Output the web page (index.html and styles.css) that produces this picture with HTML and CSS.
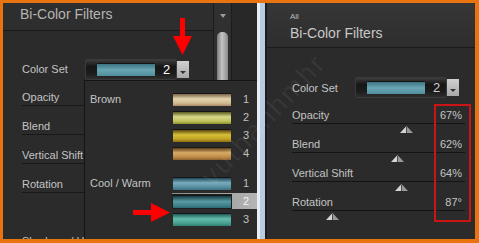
FILE: index.html
```html
<!DOCTYPE html>
<html>
<head>
<meta charset="utf-8">
<link rel="stylesheet" href="styles.css">
</head>
<body>
<div class="frame">
  <section class="lpanel">
    <div class="lmain">
      <header class="lhead">Bi-Color Filters</header>
      <div class="lbody">
        <div class="crow">
          <span class="lbl">Color Set</span>
          <div class="dd">
            <span class="dd-box"><span class="sw sw-cur"></span><span class="dd-num">2</span></span>
            <span class="dd-btn"><span class="tri-down"></span></span>
          </div>
        </div>
        <div class="lrow"><span class="lbl">Opacity</span></div>
        <div class="lrow"><span class="lbl">Blend</span></div>
        <div class="lrow"><span class="lbl">Vertical Shift</span></div>
        <div class="lrow"><span class="lbl">Rotation</span></div>
        <div class="lsub">Shadows / Highlights</div>
      </div>
    </div>
    <div class="scrollcol">
      <span class="scroll-up"></span>
      <span class="scroll-thumb"></span>
    </div>
    <div class="lstrip"></div>

    <div class="popup">
      <div class="group">
        <div class="glabel">Brown</div>
        <div class="items">
          <div class="item"><span class="sw sw-b1"></span><span class="num">1</span></div>
          <div class="item"><span class="sw sw-b2"></span><span class="num">2</span></div>
          <div class="item"><span class="sw sw-b3"></span><span class="num">3</span></div>
          <div class="item"><span class="sw sw-b4"></span><span class="num">4</span></div>
        </div>
      </div>
      <div class="group">
        <div class="glabel">Cool / Warm</div>
        <div class="items">
          <div class="item"><span class="sw sw-c1"></span><span class="num">1</span></div>
          <div class="item selected"><span class="sw sw-c2"></span><span class="num">2</span></div>
          <div class="item"><span class="sw sw-c3"></span><span class="num">3</span></div>
        </div>
      </div>
    </div>
  </section>

  <div class="divider"></div>

  <section class="rpanel">
    <header class="rhead">
      <div class="crumb">All</div>
      <div class="rtitle">Bi-Color Filters</div>
    </header>
    <div class="rbody">
      <div class="crow rcrow">
        <span class="lbl">Color Set</span>
        <div class="dd">
          <span class="dd-box"><span class="sw sw-cur"></span><span class="dd-num dim">2</span></span>
          <span class="dd-btn"><span class="tri-down"></span></span>
        </div>
      </div>
      <div class="slider">
        <div class="shead"><span class="lbl">Opacity</span><span class="val">67%</span></div>
        <div class="track"><svg class="thumb" style="--v:67%" width="13" height="7" viewBox="0 0 13 7"><polygon points="0,7 6.5,0 6.5,7" fill="#d4d4d4"/><polygon points="6.5,0 13,7 6.5,7" fill="#9a9a9a"/><line x1="6.5" y1="1" x2="6.5" y2="7" stroke="#4a4a4a" stroke-width="1"/></svg></div>
      </div>
      <div class="slider">
        <div class="shead"><span class="lbl">Blend</span><span class="val">62%</span></div>
        <div class="track"><svg class="thumb" style="--v:62%" width="13" height="7" viewBox="0 0 13 7"><polygon points="0,7 6.5,0 6.5,7" fill="#d4d4d4"/><polygon points="6.5,0 13,7 6.5,7" fill="#9a9a9a"/><line x1="6.5" y1="1" x2="6.5" y2="7" stroke="#4a4a4a" stroke-width="1"/></svg></div>
      </div>
      <div class="slider">
        <div class="shead"><span class="lbl">Vertical Shift</span><span class="val">64%</span></div>
        <div class="track"><svg class="thumb" style="--v:64%" width="13" height="7" viewBox="0 0 13 7"><polygon points="0,7 6.5,0 6.5,7" fill="#d4d4d4"/><polygon points="6.5,0 13,7 6.5,7" fill="#9a9a9a"/><line x1="6.5" y1="1" x2="6.5" y2="7" stroke="#4a4a4a" stroke-width="1"/></svg></div>
      </div>
      <div class="slider">
        <div class="shead"><span class="lbl">Rotation</span><span class="val">87°</span></div>
        <div class="track"><svg class="thumb" style="--v:24%" width="13" height="7" viewBox="0 0 13 7"><polygon points="0,7 6.5,0 6.5,7" fill="#d4d4d4"/><polygon points="6.5,0 13,7 6.5,7" fill="#9a9a9a"/><line x1="6.5" y1="1" x2="6.5" y2="7" stroke="#4a4a4a" stroke-width="1"/></svg></div>
      </div>
    </div>
  </section>

  <div class="watermark">vuthanhmhr</div>

  <svg class="arrow-down" width="19" height="37" viewBox="0 0 19 37">
    <rect x="7" y="0" width="5" height="20" fill="#ff0000"/>
    <polygon points="0,18 19,18 9.5,37" fill="#ff0000"/>
  </svg>
  <svg class="arrow-right" width="37" height="19" viewBox="0 0 37 19">
    <rect x="0" y="7" width="20" height="5" fill="#ff0000"/>
    <polygon points="18,0 37,9.5 18,19" fill="#ff0000"/>
  </svg>
  <div class="redbox"></div>
</div>
</body>
</html>
```

FILE: styles.css
```css
html, body {
  margin: 0;
  padding: 0;
  background: #e8730f;
  overflow: hidden;
}

.frame {
  position: relative;
  box-sizing: border-box;
  width: 479px;
  height: 243px;
  border-style: solid;
  border-color: #e8730f;
  border-width: 3px 4px 4px 3px;
  display: flex;
  overflow: hidden;
  background: #2b2b2b;
  font-family: "Liberation Sans", Arial, sans-serif;
  font-size: 11px;
  color: #c4c4c4;
}

/* ---------- left panel ---------- */
.lpanel {
  position: relative;
  width: 254px;
  display: flex;
  flex: none;
}

.lmain {
  width: 210px;
  flex: none;
  background: #2b2b2b;
}

.lhead {
  height: 27px;
  line-height: 22px;
  padding-left: 17px;
  font-size: 14px;
  color: #b4b4b4;
  background: #2e2e2e;
  border-bottom: 1px solid #1a1a1a;
}

.lbody {
  padding: 27px 0 0 19px;
}

.crow {
  display: flex;
  align-items: center;
  height: 22px;
  margin-bottom: -3px;
}

.crow .lbl {
  width: 63px;
  flex: none;
}

.lbl {
  line-height: 12px;
  white-space: nowrap;
}

.dd {
  display: flex;
  align-items: center;
  height: 21px;
}

.dd-box {
  box-sizing: border-box;
  width: 92px;
  height: 21px;
  display: flex;
  align-items: center;
  padding-left: 11px;
  background: linear-gradient(#3c3c3c, #161616 35%, #1c1c1c 70%, #2e2e2e);
  border: 1px solid #3a3a3a;
  border-radius: 2px;
}

.dd-box .sw {
  width: 58px;
  height: 13px;
}

.dd-num {
  margin-left: 8px;
  font-size: 13px;
  color: #ffffff;
}

.dd-num.dim {
  color: #cfcfcf;
}

.dd-btn {
  width: 12px;
  height: 17px;
  display: flex;
  align-items: flex-end;
  justify-content: center;
  box-sizing: border-box;
  padding-bottom: 4px;
  background: linear-gradient(#d0d0d0, #a8a8a8);
}

.tri-down {
  width: 0;
  height: 0;
  border-left: 3px solid transparent;
  border-right: 3px solid transparent;
  border-top: 3px solid #333;
}

.lrow {
  box-sizing: border-box;
  height: 29px;
  padding-bottom: 2px;
  display: flex;
  align-items: flex-end;
  border-bottom: 1px solid #181818;
}

.lsub {
  margin-top: 42px;
  line-height: 12px;
  white-space: nowrap;
}

.scrollcol {
  box-sizing: border-box;
  width: 19px;
  flex: none;
  display: flex;
  flex-direction: column;
  align-items: center;
  background: #303030;
  border-left: 1px solid #1c1c1c;
  border-right: 1px solid #1c1c1c;
}

.scroll-up {
  margin-top: 11px;
  width: 0;
  height: 0;
  border-left: 3px solid transparent;
  border-right: 3px solid transparent;
  border-top: 4px solid #9a9a9a;
}

.scroll-thumb {
  margin-top: 14px;
  width: 11px;
  flex: 1;
  border-radius: 5px 5px 0 0;
  background: linear-gradient(to right, #7a7a7a, #c4c4c4 45%, #8a8a8a);
}

.lstrip {
  flex: 1;
  background: #282828;
}

/* ---------- popup list ---------- */
.popup {
  position: absolute;
  left: 81px;
  top: 77px;
  right: 0;
  bottom: 0;
  box-sizing: border-box;
  padding-top: 8px;
  background: #2b2b2b;
  border-left: 1px solid #141414;
  border-top: 1px solid #141414;
}

.group {
  display: flex;
  margin-bottom: 10px;
}

.glabel {
  width: 82px;
  flex: none;
  padding-left: 5px;
  line-height: 20px;
  font-size: 11px;
  color: #c4c4c4;
  white-space: nowrap;
}

.items {
  flex: 1;
}

.item {
  height: 16px;
  margin: 2px 0;
  padding-left: 1px;
  display: flex;
  align-items: center;
}

.item .sw {
  width: 58px;
  height: 13px;
}

.num {
  margin-left: 12px;
  color: #c0c0c0;
}

.item.selected {
  background: linear-gradient(to right, #8c8c8c, #b4b4b4);
}

.item.selected .num {
  color: #f4f4f4;
}

.item.selected .sw {
  box-shadow: 0 0 0 1px #1e1e1e;
}

.sw {
  display: block;
  box-sizing: border-box;
  border-top: 1px solid #151515;
}

.sw-cur { background: linear-gradient(#3c7482, #6aa6b4 50%, #4f8e9c); }
.sw-b1 { background: linear-gradient(#7a6448, #e2d2ac 40%, #d2bc92 75%, #a88c66); }
.sw-b2 { background: linear-gradient(#5c5c1c, #d6d88a 40%, #c2c45e 75%, #8e8e30); }
.sw-b3 { background: linear-gradient(#5a4410, #d6c038 40%, #c2a424 75%, #8a6c10); }
.sw-b4 { background: linear-gradient(#5e3e1c, #d8aa66 40%, #c08c48 75%, #8a6030); }
.sw-c1 { background: linear-gradient(#1e4656, #78acbc 40%, #5890a2 75%, #3a7080); }
.sw-c2 { background: linear-gradient(#163c44, #5a9aa2 45%, #3e8088 80%, #2c6a72); }
.sw-c3 { background: linear-gradient(#1e5e56, #64bcac 40%, #4aa292 75%, #2e8070); }

/* ---------- divider ---------- */
.divider {
  width: 10px;
  flex: none;
  background: linear-gradient(to right, #e6eef6 0 3px, #b8cde2 3px 8px, #1c1c1c 8px 10px);
}

/* ---------- right panel ---------- */
.rpanel {
  flex: 1;
  background: #2b2b2b;
}

.rhead {
  box-sizing: border-box;
  height: 45px;
  padding: 9px 0 0 23px;
  background: linear-gradient(#363636, #2e2e2e);
  border-bottom: 1px solid #1a1a1a;
}

.crumb {
  font-size: 8px;
  line-height: 10px;
  color: #bcbcbc;
}

.rtitle {
  font-size: 14px;
  line-height: 16px;
  margin-top: 3px;
  color: #c8c8c8;
}

.rbody {
  padding: 29px 10px 0 25px;
}

.rcrow {
  height: 21px;
  margin-bottom: 9px;
}

.slider {
  height: 29px;
}

.shead {
  display: flex;
  justify-content: space-between;
  align-items: center;
  height: 16px;
  padding-right: 3px;
}

.val {
  color: #c4c4c4;
}

.track {
  height: 12px;
  border-top: 1px solid #141414;
}

.thumb {
  display: block;
  margin-top: 2px;
  margin-left: calc(var(--v) - 8px);
}

/* ---------- overlays ---------- */
.watermark {
  position: absolute;
  left: 177px;
  top: 101px;
  transform: rotate(-47deg);
  font-size: 28px;
  letter-spacing: 2px;
  color: rgba(255, 255, 255, 0.06);
  white-space: nowrap;
  pointer-events: none;
}

.arrow-down {
  position: absolute;
  left: 170px;
  top: 15px;
}

.arrow-right {
  position: absolute;
  left: 130px;
  top: 200px;
}

.redbox {
  position: absolute;
  left: 431px;
  top: 101px;
  width: 33px;
  height: 114px;
  border: 2px solid #cc1414;
}
```
